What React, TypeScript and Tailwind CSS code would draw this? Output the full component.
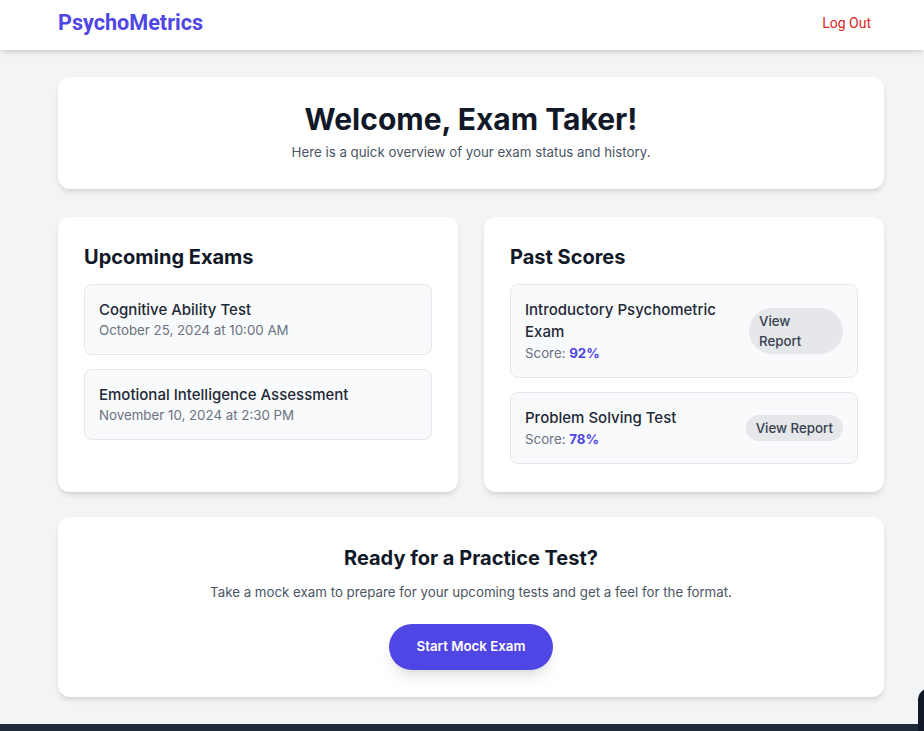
export default function App() {
  return (
    <div className="relative min-h-screen bg-[#f3f4f6] font-['Inter',sans-serif] text-[#111827] overflow-hidden">
      {/* Top bar */}
      <header className="bg-white shadow-md">
        <div className="flex h-[50px] items-center justify-between pb-[5px] pl-[58px] pr-[53px] font-['Roboto',sans-serif]">
          <span className="text-[21.6px] leading-7 font-bold text-[#4f46e5]">PsychoMetrics</span>
          <button className="text-sm leading-5 text-[#dc2626]">Log Out</button>
        </div>
      </header>

      <main className="pl-[58px] pr-[40px] pt-[27px] pb-[27px]">
        {/* Welcome */}
        <section className="mb-[28px] bg-white rounded-xl shadow-md px-6 pt-[24px] pb-[27px] text-center">
          <h1 className="text-[30px] leading-9 font-bold">Welcome, Exam Taker!</h1>
          <p className="mt-[5px] text-[13.3px] leading-5 text-[#4b5563]">
            Here is a quick overview of your exam status and history.
          </p>
        </section>

        <div className="mb-[25px] grid grid-cols-2 gap-[26px]">
          {/* Upcoming */}
          <section className="bg-white rounded-xl shadow-md p-[26px] pb-[28px]">
            <h2 className="text-xl leading-7 font-bold mb-[13px]">Upcoming Exams</h2>
            <div className="flex flex-col gap-[14px]">
              {[
                ["Cognitive Ability Test", "October 25, 2024 at 10:00 AM"],
                ["Emotional Intelligence Assessment", "November 10, 2024 at 2:30 PM"],
              ].map(([t, d]) => (
                <div key={t} className="rounded-lg border border-[#e5e7eb] bg-[#f9fafb] px-[14px] pt-[14px] pb-[15px]">
                  <div className="text-[15px] leading-[22px] font-medium text-[#1f2937]">{t}</div>
                  <div className="text-[13.3px] leading-[18px] text-[#6b7280]">{d}</div>
                </div>
              ))}
            </div>
          </section>

          {/* Past scores */}
          <section className="bg-white rounded-xl shadow-md p-[26px] pb-[28px]">
            <h2 className="text-xl leading-7 font-bold mb-[13px]">Past Scores</h2>
            <div className="flex flex-col gap-[14px]">
              {[
                ["Introductory Psychometric Exam", "92%"],
                ["Problem Solving Test", "78%"],
              ].map(([t, s]) => (
                <div
                  key={t}
                  className="flex items-center justify-between gap-4 rounded-lg border border-[#e5e7eb] bg-[#f9fafb] px-[14px] py-[14px]"
                >
                  <div>
                    <div className="text-[15px] leading-[22px] font-medium text-[#1f2937]">{t}</div>
                    <div className="text-[13.3px] leading-5 text-[#6b7280]">
                      Score: <span className="font-bold text-[#4f46e5]">{s}</span>
                    </div>
                  </div>
                  <button className="min-w-[94px] rounded-full bg-[#e5e7eb] px-[10px] py-[3px] text-left text-[13.3px] leading-5 font-medium text-[#374151]">
                    View Report
                  </button>
                </div>
              ))}
            </div>
          </section>
        </div>

        {/* Practice */}
        <section className="bg-white rounded-xl shadow-md px-6 pt-[27px] pb-[27px] text-center">
          <h2 className="text-xl leading-7 font-bold">Ready for a Practice Test?</h2>
          <p className="mt-[10px] text-[13.3px] leading-5 text-[#4b5563]">
            Take a mock exam to prepare for your upcoming tests and get a feel for the format.
          </p>
          <button className="mt-[22px] h-[46px] w-[164px] rounded-full bg-[#4f46e5] text-[13.3px] font-semibold text-white shadow-lg">
            Start Mock Exam
          </button>
        </section>
      </main>

      <footer className="h-[7px] bg-[#1f2937]" />
      <div className="absolute right-[-20px] top-[688px] h-[60px] w-[26px] rounded-xl bg-[#111827]" />
    </div>
  );
}
